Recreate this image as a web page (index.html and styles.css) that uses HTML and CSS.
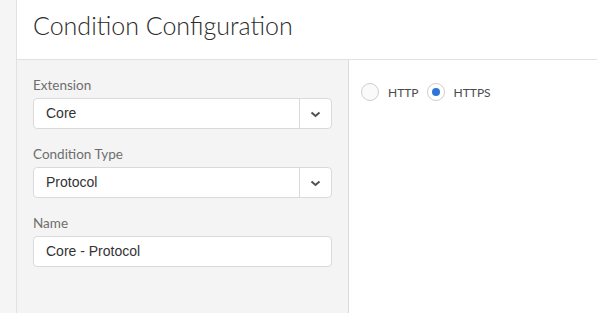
FILE: index.html
```html
<!DOCTYPE html>
<html lang="en">
<head>
    <meta charset="UTF-8">
    <meta name="viewport" content="width=device-width, initial-scale=1.0">
    <title>Condition Configuration</title>
    <link rel="stylesheet" href="styles.css">
</head>
<body>
    <div class="rail"></div>
    <div class="main">
        <div class="header">
            <h1 class="title">Condition Configuration</h1>
        </div>
        <div class="content">
            <div class="sidebar">
                <label class="field-label">Extension</label>
                <div class="select">
                    <span class="select-value">Core</span>
                    <span class="select-button">
                        <svg width="11" height="7" viewBox="0 0 11 7"><path d="M1.5 1.5 L5.5 5 L9.5 1.5" fill="none" stroke="#505050" stroke-width="2"/></svg>
                    </span>
                </div>
                <label class="field-label">Condition Type</label>
                <div class="select">
                    <span class="select-value">Protocol</span>
                    <span class="select-button">
                        <svg width="11" height="7" viewBox="0 0 11 7"><path d="M1.5 1.5 L5.5 5 L9.5 1.5" fill="none" stroke="#505050" stroke-width="2"/></svg>
                    </span>
                </div>
                <label class="field-label">Name</label>
                <div class="textfield">Core - Protocol</div>
            </div>
            <div class="settings">
                <div class="radio-group">
                    <span class="radio"></span>
                    <span class="radio-label">HTTP</span>
                    <span class="radio checked"></span>
                    <span class="radio-label">HTTPS</span>
                </div>
            </div>
        </div>
    </div>
</body>
</html>
```

FILE: styles.css
```css
/* Condition editor */
body {
    margin: 0;
    height: 313px;
    display: flex;
    background-color: #fff;
    font-family: Lato, "Liberation Sans", sans-serif;
    overflow: hidden;
}

.rail {
    width: 16px;
    background-color: #f5f5f5;
    border-right: 1px solid #e1e1e1;
}

.main {
    flex: 1;
    display: flex;
    flex-direction: column;
}

.header {
    height: 60px;
    border-bottom: 1px solid #e1e1e1;
    box-sizing: border-box;
    padding-left: 16px;
    display: flex;
    align-items: center;
}

.title {
    margin: 0;
    font-weight: 300;
    font-size: 25px;
    color: #2c2c2c;
    margin-top: -9px;
}

.content {
    flex: 1;
    display: flex;
}

.sidebar {
    width: 332px;
    background-color: #f4f4f4;
    border-right: 1px solid #dadada;
    padding: 16px 16px 0 16px;
    box-sizing: border-box;
    display: flex;
    flex-direction: column;
}

.field-label {
    font-size: 13.5px;
    color: #6e6e6e;
    line-height: 18px;
    margin-bottom: 4px;
}

.select,
.textfield {
    height: 31px;
    flex-shrink: 0;
    box-sizing: border-box;
    background-color: #fff;
    border: 1px solid #dadada;
    border-radius: 4px;
    margin-bottom: 16px;
    font-family: "Liberation Sans", Arial, sans-serif;
    font-size: 14px;
    color: #333;
}

.select {
    display: flex;
}

.select-value {
    flex: 1;
    padding-left: 12px;
    line-height: 29px;
}

.select-button {
    width: 32px;
    border-left: 1px solid #dadada;
    display: flex;
    align-items: center;
    justify-content: center;
    padding-top: 2px;
    box-sizing: border-box;
}

.textfield {
    padding-left: 12px;
    line-height: 29px;
}

.settings {
    flex: 1;
    padding: 23px 0 0 12px;
}

.radio-group {
    display: flex;
    align-items: center;
}

.radio {
    width: 16px;
    height: 16px;
    border: 1px solid #cfcfcf;
    border-radius: 50%;
    background-color: #fafafa;
    margin-right: 9px;
    position: relative;
}

.radio.checked {
    background-color: #fff;
}

.radio.checked::after {
    content: "";
    position: absolute;
    left: 4px;
    top: 4px;
    width: 8px;
    height: 8px;
    border-radius: 50%;
    background-color: #2d75d6;
}

.radio-label {
    font-size: 12px;
    color: #4b4b4b;
    margin-right: 8px;
}
```
